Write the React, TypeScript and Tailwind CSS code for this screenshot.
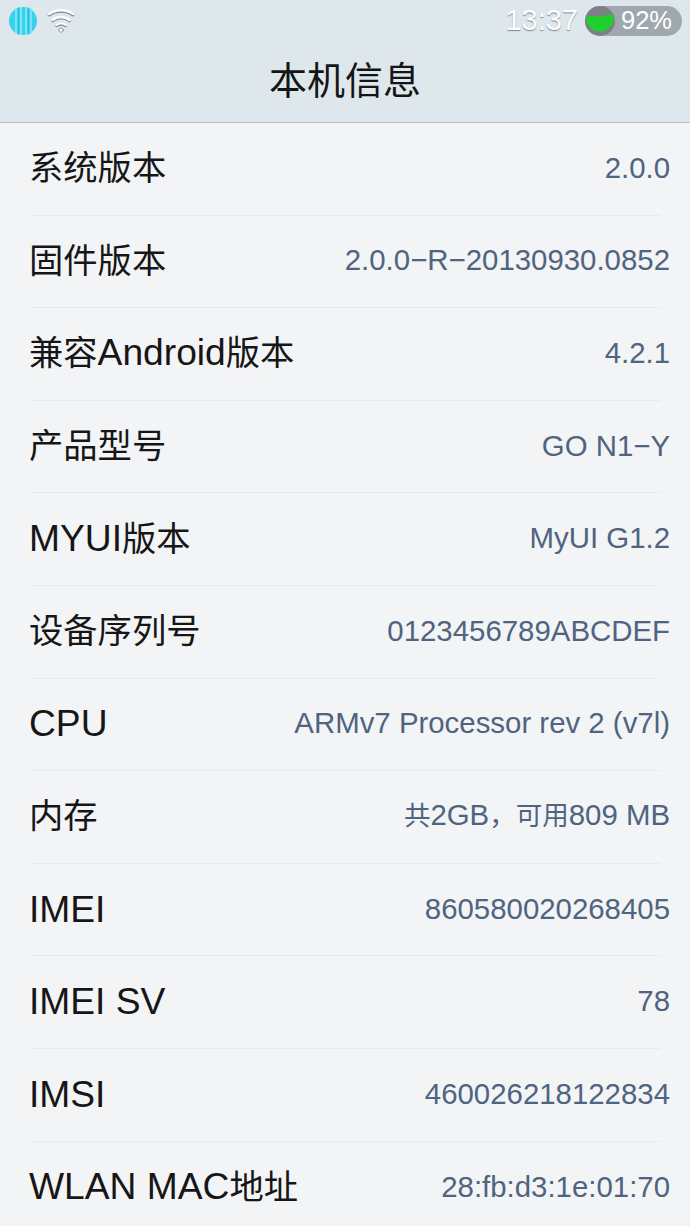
const rows: [string, string][] = [
  ['系统版本', '2.0.0'],
  ['固件版本', '2.0.0−R−20130930.0852'],
  ['兼容Android版本', '4.2.1'],
  ['产品型号', 'GO N1−Y'],
  ['MYUI版本', 'MyUI G1.2'],
  ['设备序列号', '0123456789ABCDEF'],
  ['CPU', 'ARMv7 Processor rev 2 (v7l)'],
  ['内存', '共2GB，可用809 MB'],
  ['IMEI', '860580020268405'],
  ['IMEI SV', '78'],
  ['IMSI', '460026218122834'],
  ['WLAN MAC地址', '28:fb:d3:1e:01:70'],
]

// the phone font sets latin and chinese at different sizes
function Runs({ text, cjkClass }: { text: string; cjkClass: string }) {
  const parts = text.split(/([\u4e00-\u9fff，]+)/).filter(Boolean)
  return (
    <>
      {parts.map((part, i) =>
        /[\u4e00-\u9fff，]/.test(part) ? (
          <span key={i} className={cjkClass}>
            {part}
          </span>
        ) : (
          <span key={i}>{part}</span>
        ),
      )}
    </>
  )
}

function StatusBar() {
  return (
    <div className="flex h-[41px] items-center justify-between pl-[9px] pr-[8px]">
      <div className="flex items-center gap-[10px]">
        <svg width="28" height="28" viewBox="0 0 28 28">
          <circle cx="14" cy="14" r="14" fill="#36d3ee" />
          <path d="M7 1v26M12 0v28M17 0v28M22 1v26" stroke="#8ce6f6" strokeWidth="1.6" />
          <path d="M9.500 0v28M19.500 0v28" stroke="#1fa9c9" strokeWidth="1" opacity="0.5" />
        </svg>
        <svg width="28" height="26" viewBox="0 0 28 26" fill="none" strokeLinecap="round">
          <path d="M2 7C9 2 19 2 26 7" stroke="#7d848a" strokeWidth="2.800" />
          <path d="M2 6C9 1 19 1 26 6" stroke="#fff" strokeWidth="2.600" />
          <path d="M5.500 13C10.500 9 17.500 9 22.500 13" stroke="#7d848a" strokeWidth="2.600" />
          <path d="M5.500 12C10.500 8 17.500 8 22.500 12" stroke="#fff" strokeWidth="2.400" />
          <path d="M9.500 18C12 16 16 16 18.500 18" stroke="#7d848a" strokeWidth="2.400" />
          <path d="M9.500 17C12 15 16 15 18.500 17" stroke="#fff" strokeWidth="2.200" />
          <circle cx="14" cy="22" r="2.200" fill="#fff" stroke="#7d848a" strokeWidth="0.800" />
        </svg>
      </div>
      <div className="flex items-center gap-[7px]">
        <span className="text-[29px] leading-none text-white [text-shadow:0_1px_1px_rgba(60,70,80,0.6)]">13:37</span>
        <div className="flex h-[30px] w-[97px] items-center rounded-full bg-[#a0a8af]">
          <svg width="30" height="30" viewBox="0 0 30 30" className="shrink-0">
            <circle cx="15" cy="15" r="15" fill="#7b8187" />
            <path d="M1 12C5 8 9 11 15 10.500 21 10 24 6 29 11A14 14 0 1 1 1 12Z" fill="#1fd02c" />
          </svg>
          <span className="ml-[6px] text-[25.500px] leading-none text-white">92%</span>
        </div>
      </div>
    </div>
  )
}

export default function App() {
  return (
    <div className="h-[1226px] w-[690px] overflow-hidden bg-[#f3f4f6] font-['Liberation_Sans','Noto_Sans_CJK_SC',sans-serif]">
      <div className="h-[123px] border-b border-[#b4bcc3] bg-[#dde7ec]">
        <StatusBar />
        <h1 className="mt-[3px] text-center text-[38px] leading-[74px] font-normal text-[#151515]">本机信息</h1>
      </div>
      <div className="px-[30px]">
        {rows.map(([label, value], i) => (
          <div
            key={label}
            className={`flex h-[92.6px] items-center justify-between pb-[2px] ${i < rows.length - 1 ? 'border-b border-[#e9eaed]' : ''}`}
          >
            <span className="ml-[-1px] text-[37.2px] leading-[44px] whitespace-nowrap text-[#161616]">
              <Runs text={label} cjkClass="text-[34.3px]" />
            </span>
            <span className="mr-[-10px] text-[29.4px] leading-[40px] whitespace-nowrap text-[#4f6480]">
              <Runs text={value} cjkClass="text-[26.5px]" />
            </span>
          </div>
        ))}
      </div>
    </div>
  )
}
